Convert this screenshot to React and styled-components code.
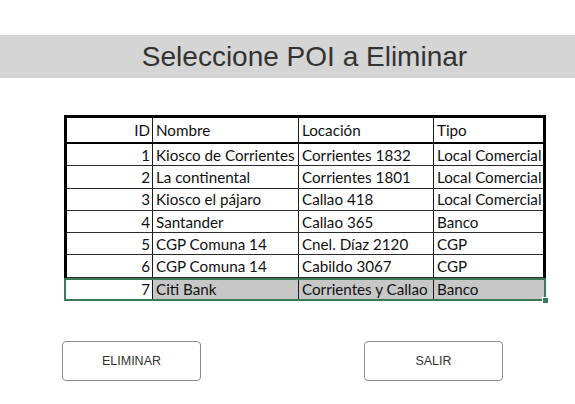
import React from 'react';
import styled, { createGlobalStyle } from 'styled-components';

const GlobalStyle = createGlobalStyle`
  body {
    margin: 0;
    background: #ffffff;
    font-family: "Liberation Sans", Arial, sans-serif;
  }
`;

const Page = styled.div`
  display: flex;
  flex-direction: column;
  width: 575px;
  padding-top: 35px;
`;

const TitleBar = styled.h1`
  margin: 0;
  height: 43px;
  line-height: 43px;
  padding-left: 34px;
  background: #d5d5d5;
  color: #333333;
  font-size: 28px;
  font-weight: 400;
  text-align: center;
`;

const Sheet = styled.div`
  display: flex;
  flex-direction: column;
  width: 482px;
  margin: 37px 0 0 64px;
  font-family: Lato, "Liberation Sans", sans-serif;
  font-size: 15.2px;
  color: #111111;
`;

const Block = styled.div`
  border: 3px solid #000000;
  border-bottom: none;
`;

const Row = styled.div`
  display: grid;
  grid-template-columns: 85px 146px 135px 110px;
  height: ${(p) => (p.$head ? '26px' : '22.3px')};
  box-sizing: border-box;
  border-bottom: ${(p) => (p.$head ? '2px solid #000' : '1px solid #2a2a2a')};
`;

const SelectedRow = styled.div`
  position: relative;
  display: grid;
  grid-template-columns: 86px 146px 135px 111px;
  height: 23px;
  box-sizing: border-box;
  border: 2px solid #3b7a58;
`;

const Cell = styled.div`
  display: flex;
  align-items: center;
  box-sizing: border-box;
  padding: 0 3px;
  white-space: nowrap;
  overflow: hidden;
  justify-content: ${(p) => (p.$num ? 'flex-end' : 'flex-start')};
  padding-right: ${(p) => (p.$num ? '2px' : '3px')};
  border-left: ${(p) => (p.$first ? 'none' : '1px solid #1a1a1a')};
  background: ${(p) => (p.$fill ? '#c7c7c7' : 'transparent')};
`;

const Handle = styled.span`
  position: absolute;
  right: -5px;
  bottom: -5px;
  width: 5px;
  height: 5px;
  background: #3b7a58;
  border: 1px solid #ffffff;
`;

const Actions = styled.div`
  display: flex;
  gap: 163px;
  margin: 40px 0 0 62px;
`;

const Button = styled.button`
  width: 139px;
  height: 40px;
  background: #ffffff;
  border: 1px solid #8c8c8c;
  border-radius: 4px;
  color: #333333;
  font-family: "Liberation Sans", Arial, sans-serif;
  font-size: 12.5px;
  cursor: pointer;
`;

const rows = [
  [1, 'Kiosco de Corrientes', 'Corrientes 1832', 'Local Comercial'],
  [2, 'La continental', 'Corrientes 1801', 'Local Comercial'],
  [3, 'Kiosco el pájaro', 'Callao 418', 'Local Comercial'],
  [4, 'Santander', 'Callao 365', 'Banco'],
  [5, 'CGP Comuna 14', 'Cnel. Díaz 2120', 'CGP'],
  [6, 'CGP Comuna 14', 'Cabildo 3067', 'CGP'],
];

export default function App() {
  return (
    <>
      <GlobalStyle />
      <Page>
        <TitleBar>Seleccione POI a Eliminar</TitleBar>
        <Sheet>
          <Block>
            <Row $head>
              <Cell $first $num>ID</Cell>
              <Cell>Nombre</Cell>
              <Cell>Locación</Cell>
              <Cell>Tipo</Cell>
            </Row>
            {rows.map(([id, nombre, loc, tipo]) => (
              <Row key={id}>
                <Cell $first $num>{id}</Cell>
                <Cell>{nombre}</Cell>
                <Cell>{loc}</Cell>
                <Cell>{tipo}</Cell>
              </Row>
            ))}
          </Block>
          <SelectedRow>
            <Cell $first $num>7</Cell>
            <Cell $fill>Citi Bank</Cell>
            <Cell $fill>Corrientes y Callao</Cell>
            <Cell $fill>Banco</Cell>
            <Handle />
          </SelectedRow>
        </Sheet>
        <Actions>
          <Button>ELIMINAR</Button>
          <Button>SALIR</Button>
        </Actions>
      </Page>
    </>
  );
}
